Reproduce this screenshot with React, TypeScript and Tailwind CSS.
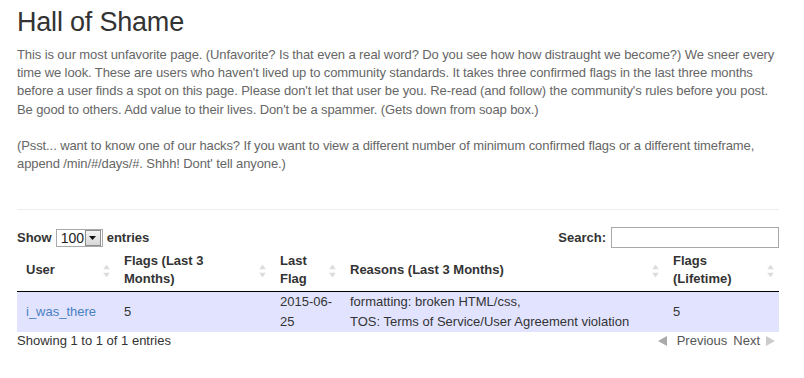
import React from 'react';

const SortIcon = () => (
  <span className="absolute right-[5px] top-1/2 -translate-y-1/2 flex flex-col items-center gap-[3px]">
    <svg width="7" height="5" viewBox="0 0 7 5">
      <path d="M3.5 0L7 5H0z" fill="#dcdcdc" />
    </svg>
    <svg width="7" height="5" viewBox="0 0 7 5">
      <path d="M0 0h7L3.5 5z" fill="#dcdcdc" />
    </svg>
  </span>
);

const columns = [
  { label: 'User', width: 'w-[98px]' },
  { label: 'Flags (Last 3 Months)', width: 'w-[156px]' },
  { label: 'Last Flag', width: 'w-[70px]' },
  { label: 'Reasons (Last 3 Months)', width: 'w-[323px]' },
  { label: 'Flags (Lifetime)', width: 'w-[115px]' },
];

const App = () => {
  return (
    <div className="min-h-screen bg-white font-['Liberation_Sans',Arial,sans-serif]">
      <div className="w-[762px] ml-[17px] pt-[6px]">
        {/* Title */}
        <h1 className="text-[27px] leading-[32px] tracking-[-0.2px] text-[#333]">Hall of Shame</h1>

        {/* Intro */}
        <div className="mt-[8px] text-[13px] leading-[18.2px] tracking-[-0.1px] text-[#666]">
          <p>
            This is our most unfavorite page. (Unfavorite? Is that even a real word? Do you see how how distraught we
            become?) We sneer every time we look. These are users who haven't lived up to community standards. It takes
            three confirmed flags in the last three months before a user finds a spot on this page. Please don't let
            that user be you. Re-read (and follow) the community's rules before you post. Be good to others. Add value
            to their lives. Don't be a spammer. (Gets down from soap box.)
          </p>
          <p className="mt-[18px]">
            (Psst... want to know one of our hacks? If you want to view a different number of minimum confirmed flags
            or a different timeframe, append /min/#/days/#. Shhh! Dont' tell anyone.)
          </p>
        </div>

        <hr className="mt-[36px] border-t border-[#eee]" />

        {/* Table controls */}
        <div className="mt-[17px] flex items-center justify-between text-[13px] font-bold text-[#333]">
          <div className="flex items-center gap-[4px]">
            <span>Show</span>
            <div className="flex items-center h-[18px] w-[47px] border border-[#a9a9a9] bg-white">
              <span className="flex-1 pl-[4px] font-normal text-[14px] leading-none text-[#222]">100</span>
              <span className="flex items-center justify-center w-[16px] h-[16px] mr-px border border-[#8e8e8e] bg-[linear-gradient(#f4f4f4,#d8d8d8)]">
                <svg width="7" height="4" viewBox="0 0 7 4">
                  <path d="M0 0h7L3.5 4z" fill="#111" />
                </svg>
              </span>
            </div>
            <span>entries</span>
          </div>
          <div className="flex items-center gap-[5px]">
            <span>Search:</span>
            <input className="w-[168px] h-[21px] border border-[#a9a9a9] outline-none" />
          </div>
        </div>

        {/* Table */}
        <table className="mt-[2px] w-full table-fixed border-collapse text-[13px] text-[#333]">
          <thead>
            <tr className="border-b border-black">
              {columns.map((col) => (
                <th
                  key={col.label}
                  className={`${col.width} relative pl-[9px] pr-[20px] pt-[2px] pb-[3px] text-left align-middle font-bold leading-[18px]`}
                >
                  {col.label}
                  <SortIcon />
                </th>
              ))}
            </tr>
          </thead>
          <tbody>
            <tr className="bg-[#e2e4ff] leading-[20px]">
              <td className="pl-[9px] align-middle">
                <a className="text-[#4a80c0]">i_was_there</a>
              </td>
              <td className="pl-[9px] align-middle">5</td>
              <td className="pl-[9px] pr-[8px] align-middle">2015-06-25</td>
              <td className="pl-[9px] align-middle">
                formatting: broken HTML/css,
                <br />
                TOS: Terms of Service/User Agreement violation
              </td>
              <td className="pl-[9px] align-middle">5</td>
            </tr>
          </tbody>
        </table>

        {/* Footer */}
        <div className="pt-px flex items-center justify-between text-[13px] leading-[16px] text-[#333]">
          <span>Showing 1 to 1 of 1 entries</span>
          <div className="flex items-center text-[#555] mr-[4px]">
            <svg width="9" height="10" viewBox="0 0 9 10" className="mr-[10px]">
              <path d="M9 0v10L0 5z" fill="#aaa" />
            </svg>
            <span>Previous</span>
            <span className="ml-[6px]">Next</span>
            <svg width="9" height="10" viewBox="0 0 9 10" className="ml-[6px]">
              <path d="M0 0v10l9-5z" fill="#ccc" />
            </svg>
          </div>
        </div>
      </div>
    </div>
  );
};

export default App;
